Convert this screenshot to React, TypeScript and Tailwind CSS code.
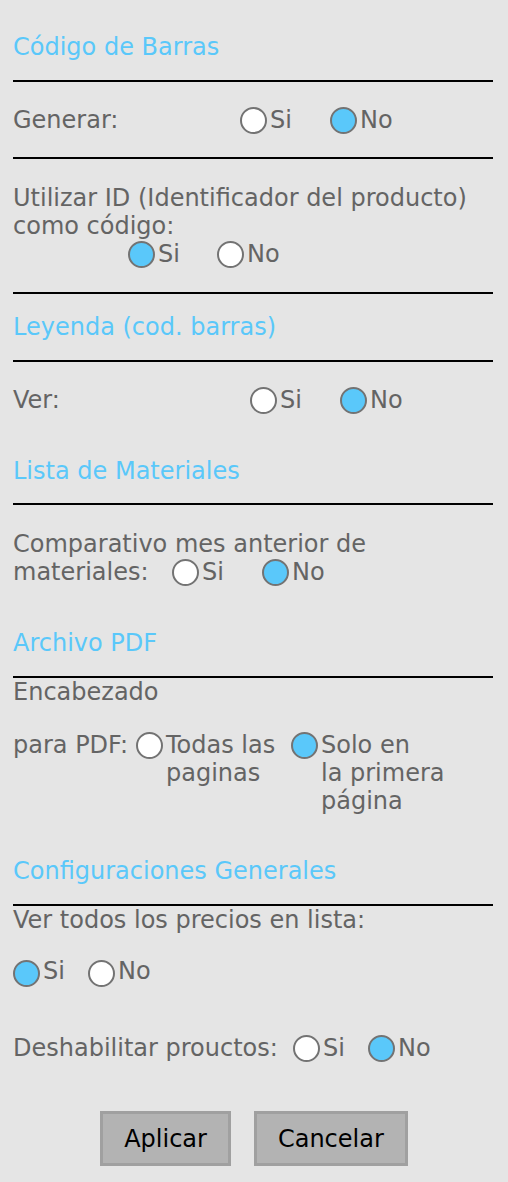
import type { ReactNode } from 'react';

function Radio({ checked, label, className = '' }: { checked: boolean; label: ReactNode; className?: string }) {
  return (
    <span className={`flex shrink-0 items-start ${className}`}>
      <span className="flex h-[28px] items-center">
        <span
          className={`h-[27px] w-[27px] shrink-0 rounded-full border-2 border-[#737373] ${
            checked ? 'bg-[#5ac8fa]' : 'bg-white'
          }`}
        />
      </span>
      <span className="ml-[3px]">{label}</span>
    </span>
  );
}

function Heading({ children, className = '' }: { children: ReactNode; className?: string }) {
  return <h2 className={`text-[#5ac8fa] ${className}`}>{children}</h2>;
}

function Rule({ className = '' }: { className?: string }) {
  return <div className={`h-[2px] bg-black ${className}`} />;
}

export default function App() {
  return (
    <div
      className="min-h-[1182px] bg-[#e5e5e5] pl-[13px] pr-[15px] pt-[33px] text-[24px] leading-[28px] text-[#646464]"
      style={{ fontFamily: '"DejaVu Sans", Verdana, sans-serif' }}
    >
      <Heading>Código de Barras</Heading>
      <Rule className="mt-[19px]" />

      <div className="mt-[24px] flex items-start">
        <span className="w-[227px] shrink-0">Generar:</span>
        <Radio checked={false} label="Si" className="w-[90px]" />
        <Radio checked label="No" />
      </div>
      <Rule className="mt-[23px]" />

      <p className="mt-[25px]">
        Utilizar ID (Identificador del producto)
        <br />
        como código:
      </p>
      <div className="flex pl-[115px]">
        <Radio checked label="Si" className="w-[89px]" />
        <Radio checked={false} label="No" />
      </div>
      <Rule className="mt-[24px]" />

      <Heading className="mt-[19px]">Leyenda (cod. barras)</Heading>
      <Rule className="mt-[19px]" />

      <div className="mt-[24px] flex items-start">
        <span className="w-[237px] shrink-0">Ver:</span>
        <Radio checked={false} label="Si" className="w-[90px]" />
        <Radio checked label="No" />
      </div>

      <Heading className="mt-[43px]">Lista de Materiales</Heading>
      <Rule className="mt-[18px]" />

      <p className="mt-[25px]">Comparativo mes anterior de</p>
      <div className="flex items-start">
        <span className="w-[159px] shrink-0">materiales:</span>
        <Radio checked={false} label="Si" className="w-[90px]" />
        <Radio checked label="No" />
      </div>

      <Heading className="mt-[43px]">Archivo PDF</Heading>
      <Rule className="mt-[19px]" />
      <p>Encabezado</p>

      <div className="mt-[25px] flex items-start">
        <span className="w-[123px] shrink-0">para PDF:</span>
        <Radio
          checked={false}
          className="w-[155px]"
          label={
            <>
              Todas las
              <br />
              paginas
            </>
          }
        />
        <Radio
          checked
          label={
            <>
              Solo en
              <br />
              la primera
              <br />
              página
            </>
          }
        />
      </div>

      <Heading className="mt-[42px]">Configuraciones Generales</Heading>
      <Rule className="mt-[19px]" />
      <p>Ver todos los precios en lista:</p>
      <div className="mt-[23px] flex items-start">
        <Radio checked label="Si" className="w-[75px] [&>span:first-child]:translate-y-[2px]" />
        <Radio checked={false} label="No" className="[&>span:first-child]:translate-y-[2px]" />
      </div>

      <div className="mt-[49px] flex items-start">
        <span className="w-[280px] shrink-0">Deshabilitar prouctos:</span>
        <Radio checked={false} label="Si" className="w-[75px]" />
        <Radio checked label="No" />
      </div>

      <div className="mt-[49px] flex justify-center gap-[23px] pl-[2px]">
        <button
          type="button"
          className="h-[55px] border-[3px] border-[#a0a0a0] bg-[#b3b3b3] px-[21px] text-black"
        >
          Aplicar
        </button>
        <button
          type="button"
          className="h-[55px] border-[3px] border-[#a0a0a0] bg-[#b3b3b3] px-[21px] text-black"
        >
          Cancelar
        </button>
      </div>
    </div>
  );
}
